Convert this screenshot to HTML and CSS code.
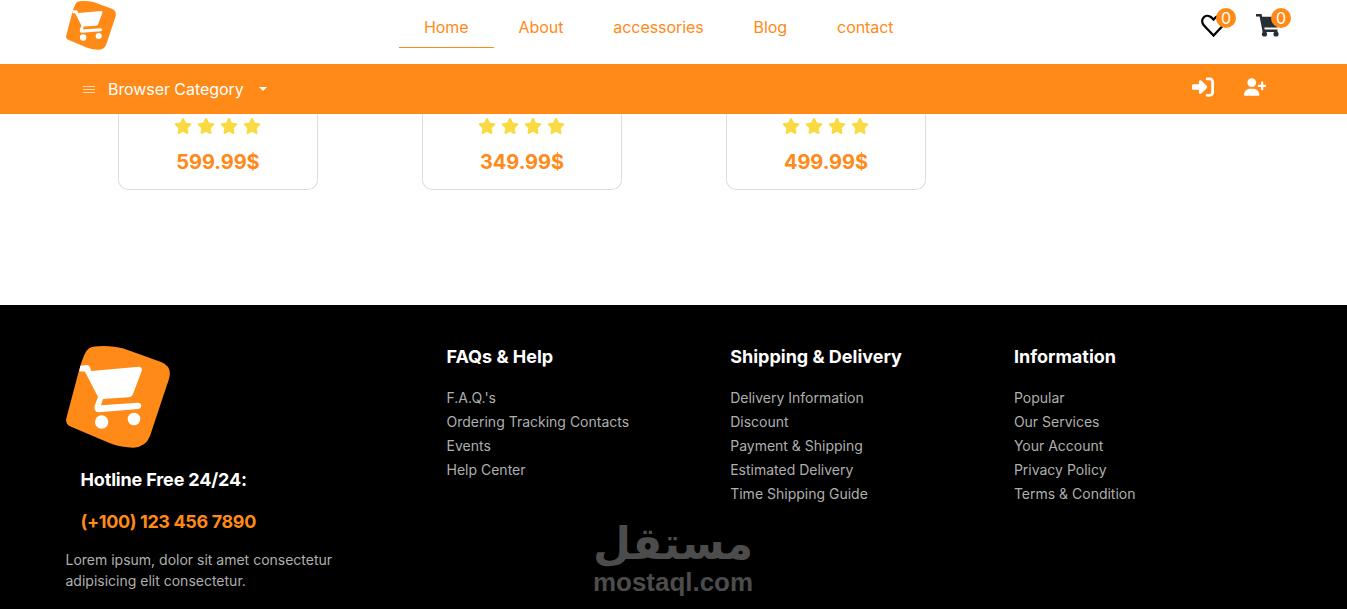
FILE: index.html
```html
<!DOCTYPE html>
<html lang="en">
<head>
<meta charset="utf-8">
<title>Shop</title>
<link rel="stylesheet" href="styles.css">
</head>
<body>
<svg class="defs" aria-hidden="true">
  <symbol id="logo" viewBox="48 33 312 306">
    <path fill="#ff8a18" d="M118 39Q128 33 160 33Q196 34 218 40Q275 60 335 82Q363 94 359 122Q356 138 350 152L300 303Q288 336 250 338Q215 338 180 325L58 273Q46 266 49 250L88 103Q102 50 118 39Z"/>
    <path fill="#fff" d="M91 92L112 90Q118 91 120 97L124 108L267 95Q278 96 275 108L249 177Q245 187 235 187L159 192L153 211L264 203Q274 204 274 213Q273 221 265 222L148 232Q131 231 134 212L144 186L105 110L88 109Z"/>
    <circle cx="155" cy="261" r="20" fill="#fff"/><circle cx="252" cy="252" r="19" fill="#fff"/>
  </symbol>
  <symbol id="star" viewBox="0 0 576 512"><path d="M316.9 18C311.6 7 300.4 0 288.1 0s-23.4 7-28.8 18L195 150.3 51.4 171.5c-12 1.8-22 10.2-25.7 21.7s-.7 24.2 7.9 32.7L137.800 329 113.200 474.700c-2 12 3 24.200 12.900 31.300s23 8 33.800 2.300l128.300-68.500 128.300 68.500c10.800 5.700 23.900 4.900 33.800-2.300s14.900-19.300 12.900-31.300L438.500 329 542.700 225.900c8.600-8.500 11.700-21.200 7.900-32.700s-13.700-19.900-25.700-21.700L381.200 150.300 316.900 18z"/></symbol>
</svg>
<header>
  <div class="topbar">
    <svg class="brand"><use href="#logo"/></svg>
    <nav>
      <a class="active">Home</a><a>About</a><a>accessories</a><a>Blog</a><a>contact</a>
    </nav>
    <div class="actions">
      <div class="action">
        <svg class="heart" viewBox="0 0 26 26"><path d="M13.500 23.500L4 13.500C-1 8 5.500 .5 11.500 5.500L13.500 7.500L15.500 5.500C21.500 .5 28 8 23 13.500Z"/></svg>
        <span class="badge">0</span>
      </div>
      <div class="action">
        <svg class="cart" viewBox="0 0 26 26"><path d="M1 2H6.500L7.200 4.800H25L22.500 15.500H9.300L9.700 17.500H22.500V20H7.600L4.600 4.500H1Z"/><circle cx="9.500" cy="22" r="2.600"/><circle cx="21" cy="22" r="2.600"/></svg>
        <span class="badge">0</span>
      </div>
    </div>
  </div>
  <div class="catbar">
    <div class="category">
      <svg class="menu" viewBox="0 0 12 9"><path d="M0 1.500H12M0 4.500H12M0 7.500H12"/></svg>
      <span>Browser Category</span>
      <i class="caret"></i>
    </div>
    <div class="account">
      <svg viewBox="0 0 512 512"><path d="M217.900 105.900L340.700 228.700c7.200 7.200 11.300 17.100 11.300 27.300s-4.100 20.100-11.300 27.300L217.900 406.100c-6.400 6.400-15 9.900-24 9.900c-18.700 0-33.900-15.200-33.900-33.900V320H32c-17.700 0-32-14.300-32-32V224c0-17.700 14.300-32 32-32H160V129.900c0-18.700 15.200-33.900 33.900-33.900c9 0 17.600 3.600 24 9.900zM352 416h64c17.700 0 32-14.300 32-32V128c0-17.700-14.300-32-32-32H352c-17.700 0-32-14.300-32-32s14.300-32 32-32h64c53 0 96 43 96 96V384c0 53-43 96-96 96H352c-17.700 0-32-14.300-32-32s14.300-32 32-32z"/></svg>
      <svg class="user" viewBox="0 0 640 512"><path d="M96 128a128 128 0 1 1 256 0A128 128 0 1 1 96 128zM0 482.300C0 383.800 79.800 304 178.300 304h91.400C368.200 304 448 383.800 448 482.300c0 16.400-13.300 29.700-29.700 29.700H29.700C13.300 512 0 498.700 0 482.300zM496 320V256H432c-40 0-40-64 0-64h64V128c0-40 64-40 64 0v64h56c40 0 40 64 0 64H560v64c0 40-64 40-64 0z"/></svg>
    </div>
  </div>
</header>
<main>
  <article class="card"><div class="stars"><svg><use href="#star"/></svg><svg><use href="#star"/></svg><svg><use href="#star"/></svg><svg><use href="#star"/></svg></div><p>599.99$</p></article>
  <article class="card"><div class="stars"><svg><use href="#star"/></svg><svg><use href="#star"/></svg><svg><use href="#star"/></svg><svg><use href="#star"/></svg></div><p>349.99$</p></article>
  <article class="card"><div class="stars"><svg><use href="#star"/></svg><svg><use href="#star"/></svg><svg><use href="#star"/></svg><svg><use href="#star"/></svg></div><p>499.99$</p></article>
</main>
<footer>
  <section class="about">
    <svg class="footer-logo"><use href="#logo"/></svg>
    <h3 class="hotline">Hotline Free 24/24:</h3>
    <h3 class="phone">(+100) 123 456 7890</h3>
    <p>Lorem ipsum, dolor sit amet consectetur adipisicing elit consectetur.</p>
  </section>
  <section><h3>FAQs &amp; Help</h3><ul><li>F.A.Q.'s</li><li>Ordering Tracking Contacts</li><li>Events</li><li>Help Center</li></ul></section>
  <section><h3>Shipping &amp; Delivery</h3><ul><li>Delivery Information</li><li>Discount</li><li>Payment &amp; Shipping</li><li>Estimated Delivery</li><li>Time Shipping Guide</li></ul></section>
  <section><h3>Information</h3><ul><li>Popular</li><li>Our Services</li><li>Your Account</li><li>Privacy Policy</li><li>Terms &amp; Condition</li></ul></section>
  <svg class="watermark" viewBox="0 0 160 76">
    <text class="ar" x="80" y="36" text-anchor="middle" textLength="160" lengthAdjust="spacingAndGlyphs" direction="rtl">مستقل</text>
    <text class="en" x="0" y="68" textLength="160" lengthAdjust="spacingAndGlyphs">mostaql.com</text>
  </svg>
</footer>
</body>
</html>
```
FILE: styles.css
```css
* { box-sizing: border-box; margin: 0; padding: 0; }
body { height: 609px; overflow: hidden; background: #fff; font-family: Inter, sans-serif; font-size: 16px; color: #ff8a18; }
.defs { position: absolute; width: 0; height: 0; }
svg { display: block; }
.topbar { height: 64px; display: flex; align-items: flex-start; padding-left: 66px; }
.brand { width: 50px; height: 49px; margin-top: .5px; }
nav { display: flex; margin-left: 283px; letter-spacing: -.07px; }
nav a { height: 48px; padding: 15px 25px 0; line-height: 24px; }
nav .active { border-bottom: 1px solid #ff8a18; }
.actions { display: flex; gap: 29px; margin: 12px 66px 0 auto; }
.action { position: relative; width: 26px; height: 26px; }
.heart, .cart { width: 26px; height: 26px; }
.heart { fill: none; stroke: #000; stroke-width: 2.3; }
.cart { fill: #262e36; }
.badge { position: absolute; left: 16px; top: -4px; width: 20px; height: 20px; border-radius: 50%; background: #ff8a18; color: #fff; line-height: 20px; text-align: center; }
.catbar { height: 50px; background: #ff8a18; color: #fff; display: flex; justify-content: space-between; padding: 0 81px 0 83px; }
.category { display: flex; align-items: center; letter-spacing: -.07px; }
.menu { width: 12px; height: 9px; margin-right: 13px; stroke: #fff; opacity: .65; }
.caret { margin-left: 15px; border: 4px solid transparent; border-top-color: #fff; border-bottom: 0; }
.account { display: flex; gap: 30px; padding-top: 12px; }
.account svg { width: 22px; height: 22px; fill: #fff; }
.account .user { width: 22px; height: 18px; margin-top: 2px; }
main { height: 191px; display: flex; gap: 104px; padding-left: 118px; }
.card { width: 200px; height: 76px; border: 1px solid #ddd; border-top: 0; border-radius: 0 0 10px 10px; }
.stars { display: flex; justify-content: center; gap: 5px; padding: 4px 2px 0 0; }
.stars svg { width: 18px; height: 16px; fill: #fada41; }
.card p { margin-top: 16px; line-height: 24px; font-size: 20px; font-weight: 700; text-align: center; letter-spacing: -.05px; }
footer { position: relative; height: 304px; background: #000; display: grid; grid-template-columns: 381px 283.7px 283.7px 284px; padding: 40px 0 0 65.5px; color: #afafaf; font-size: 14px; }
footer h3 { font-size: 18px; line-height: 24px; font-weight: 700; color: #fff; white-space: nowrap; }
footer ul { list-style: none; margin-top: 17px; line-height: 24px; }
.footer-logo { width: 104px; height: 102px; margin-top: 1px; margin-bottom: 20px; }
.about h3 { padding-left: 15px; }
.about .hotline { letter-spacing: -.16px; }
.about .phone { margin-top: 18px; color: #ff8a18; letter-spacing: -.37px; }
.about p { width: 290px; margin-top: 15px; line-height: 21px; }
.watermark { position: absolute; left: 593px; top: 218px; width: 160px; height: 76px; fill: #4c4c4c; overflow: visible; }
.ar { font: 700 45px "DejaVu Sans", sans-serif; }
.en { font: 700 26px "Liberation Sans", sans-serif; }
```
